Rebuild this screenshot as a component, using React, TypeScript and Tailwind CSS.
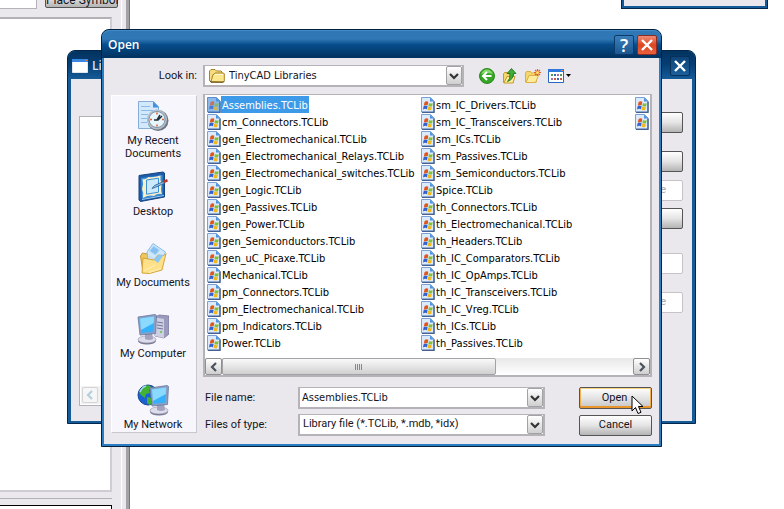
import type { ReactNode } from 'react';

const fileNames = [
  'Assemblies.TCLib',
  'cm_Connectors.TCLib',
  'gen_Electromechanical.TCLib',
  'gen_Electromechanical_Relays.TCLib',
  'gen_Electromechanical_switches.TCLib',
  'gen_Logic.TCLib',
  'gen_Passives.TCLib',
  'gen_Power.TCLib',
  'gen_Semiconductors.TCLib',
  'gen_uC_Picaxe.TCLib',
  'Mechanical.TCLib',
  'pm_Connectors.TCLib',
  'pm_Electromechanical.TCLib',
  'pm_Indicators.TCLib',
  'Power.TCLib',
  'sm_IC_Drivers.TCLib',
  'sm_IC_Transceivers.TCLib',
  'sm_ICs.TCLib',
  'sm_Passives.TCLib',
  'sm_Semiconductors.TCLib',
  'Spice.TCLib',
  'th_Connectors.TCLib',
  'th_Electromechanical.TCLib',
  'th_Headers.TCLib',
  'th_IC_Comparators.TCLib',
  'th_IC_OpAmps.TCLib',
  'th_IC_Transceivers.TCLib',
  'th_IC_Vreg.TCLib',
  'th_ICs.TCLib',
  'th_Passives.TCLib',
  '',
  '',
];

function FileIcon({ selected }: { selected?: boolean }) {
  return (
    <svg width="14" height="16" viewBox="0 0 14 16" className="shrink-0">
      <path d="M0.5 0.5h9l3.500 3.500v11h-12.500z" fill={selected ? '#8ab8ea' : '#dcebfb'} stroke={selected ? '#5a8fcb' : '#7d9fd4'} />
      <path d="M13 4.500v11H1" fill="none" stroke={selected ? '#3f6fae' : '#46608f'} strokeWidth="1.400" />
      <path d="M9 0.500l4 4h-4z" fill="#4d94e0" />
      <g opacity={selected ? 0.7 : 1}>
        <path d="M3.500 5.200q1.700-1.600 3.800-.5l-.6 3.600q-2-.9-3.900.5z" fill="#e0561f" />
        <path d="M7.900 6q2 1 3.800.2l-.6 3q-1.800.8-3.700-.2z" fill="#84bf35" />
        <path d="M2.600 9.200q2-1.200 4-.3l-.6 3.300q-2-.8-4 .3z" fill="#3461cf" />
        <path d="M7.200 9.600q2 1 3.700.2l-.7 3.200q-1.700.8-3.600-.2z" fill="#f0b818" />
      </g>
    </svg>
  );
}

function FolderIcon() {
  return (
    <svg width="16" height="14" viewBox="0 0 16 14" className="shrink-0">
      <path d="M.500 11V2l1.500-1.500h4L7.500 2H12l1 1v2" fill="#f6dc7c" stroke="#a9832a" />
      <path d="M2 12.500L4 5.500h1L6 4h8.500l.8 1v6.500l-1 1.300z" fill="#fbe88e" stroke="#a9832a" />
      <path d="M5.500 5.500h8.500" stroke="#fffbd8" />
      <path d="M.500 11l1.500 2.300h12.300l1.200-1.500" fill="none" stroke="#6b5310" />
    </svg>
  );
}

function Chevron({ direction, color = '#4a525e' }: { direction: 'left' | 'right' | 'down'; color?: string }) {
  const paths = {
    left: 'M7 1L3 5l4 4',
    right: 'M3 1l4 4-4 4',
    down: 'M1 3l4 4 4-4',
  };
  return (
    <svg width="10" height="10" viewBox="0 0 10 10">
      <path d={paths[direction]} fill="none" stroke={color} strokeWidth="2.200" />
    </svg>
  );
}

function RecentIcon() {
  return (
    <svg width="32" height="32" viewBox="0 0 32 32">
      <path d="M1.500 1.500h15l5 5v22h-20z" fill="#d3e8fb" stroke="#86acd8" />
      <path d="M16 1.500l6 6h-6z" fill="#3f92e2" />
      <path d="M4 6.500h9M4 10.500h12M4 14.500h7M4 18.500h6M4 22.500h6" stroke="#8bbce9" />
      <circle cx="21" cy="20.500" r="10.500" fill="#6f7780" />
      <circle cx="20" cy="19.500" r="10" fill="#b4bec8" />
      <circle cx="20" cy="19.500" r="8" fill="#e7f6fd" stroke="#7b93a8" />
      <path d="M20 12.500v2M20 24.500v2M13 19.500h2M25 19.500h2" stroke="#e0602c" strokeWidth="1.500" />
      <path d="M17 20h4l4-4M20 20l3-5" fill="none" stroke="#20303c" strokeWidth="1.500" />
    </svg>
  );
}

function DesktopIcon() {
  return (
    <svg width="32" height="32" viewBox="0 0 32 32">
      <path d="M2 4.500l24-3.500 1.500 1V26L3.500 30.500 2 29z" fill="#1d5cab" stroke="#17437f" />
      <path d="M4 7l21.500-3v20L5 28z" fill="#3b8edc" />
      <path d="M5.500 8q3 1 6-2 5 1 12-1.500-1 4 1.500 8-2 6 0 10.500-5-1-8 2-5-1.500-11 2 1-5-1-9 2-5 .5-10z" fill="#faf0c4" />
      <path d="M9.500 9l12-1.800v14l-12 2z" fill="#cdeafc" stroke="#3b8fd8" />
      <path d="M15 17.500l2.500-3 9-4 1 1.800-9 4z" fill="#8cc4ec" stroke="#24558d" strokeWidth=".8" />
      <path d="M26.500 9.500l3.500-1.500 1 2.500-3.500 1.500z" fill="#c0391f" />
      <path d="M5 28.500L27 24.500" stroke="#9cccf2" />
    </svg>
  );
}

function DocumentsIcon() {
  return (
    <svg width="32" height="32" viewBox="0 0 32 32">
      <path d="M3.500 14l2-3 5 1 1 4 5 9L6 30z" fill="#efc65a" stroke="#c99a32" />
      <path d="M10 10L16 1.500l12.500 8.500L22 24l-11-6z" fill="#cfe8fb" stroke="#8bbce6" />
      <path d="M12.500 9l4-5 6 4-4 5zM12 14l8 5" fill="#84c0f2" stroke="#b6daf6" />
      <path d="M5 31l1-15 11 2 4-5 6 .5 2-2-4 16.500-12.500 3.500z" fill="#fde087" stroke="#d6a43a" />
      <path d="M17 18l4-5 5.500 0-5.500 8z" fill="#8ac8f5" />
      <path d="M7 29l11-6M12 30.500l12-4" stroke="#fff3bd" />
    </svg>
  );
}

function Monitor() {
  return (
    <>
      <ellipse cx="10" cy="28" rx="9" ry="3.500" fill="#74748f" />
      <ellipse cx="10" cy="26.500" rx="9" ry="3.500" fill="#dcdcea" stroke="#9c9cb6" strokeWidth=".7" />
      <path d="M8 19h7l1 7q-4 2-8 0z" fill="#a3a3c0" />
      <path d="M1 4l17-2.500 1.500 1-1 18L3 22z" fill="#8e9fc4" stroke="#6678a0" strokeWidth=".8" />
      <path d="M3 5.500L17 3.500l-.5 15L4.500 20z" fill="#35b0fa" />
      <path d="M3 5.500L17 3.500L16.800 10L4 17z" fill="#8adaff" />
    </>
  );
}

function ComputerIcon() {
  return (
    <svg width="32" height="32" viewBox="0 0 32 32">
      <path d="M18 4.500l4-2.500 10 1v18l-5 4-9-2z" fill="#9b9bbd" stroke="#77779c" strokeWidth=".8" />
      <path d="M18 4.500l9 1.500v19l-9-2z" fill="#cfcfe4" />
      <path d="M20 9l6 1M20 12l6 1M20 15l6 1" stroke="#74749a" />
      <circle cx="24" cy="19" r="1" fill="#54c83a" />
      <Monitor />
    </svg>
  );
}

function NetworkIcon() {
  return (
    <svg width="32" height="32" viewBox="0 0 32 32">
      <circle cx="11" cy="11" r="10" fill="#1a62d2" stroke="#17459b" />
      <path d="M5 4q4-4 8-2l2 2-3 2 1 3-4 1-1 4-4-3-2-3zM10 13l5 1 1 4-3 3-3-2z" fill="#43b233" />
      <path d="M3 8q2-5 6-6" fill="none" stroke="#a3def5" strokeWidth="1.500" />
      <g transform="translate(12 0)">
        <Monitor />
      </g>
    </svg>
  );
}

const places: { label: string; icon: ReactNode }[] = [
  { label: 'My Recent Documents', icon: <RecentIcon /> },
  { label: 'Desktop', icon: <DesktopIcon /> },
  { label: 'My Documents', icon: <DocumentsIcon /> },
  { label: 'My Computer', icon: <ComputerIcon /> },
  { label: 'My Network', icon: <NetworkIcon /> },
];

function Toolbar() {
  return (
    <div className="ml-[15px] flex items-center gap-[7px]">
      <button aria-label="Back">
        <svg width="16" height="16" viewBox="0 0 16 16">
          <circle cx="8" cy="8" r="7.500" fill="#35a526" stroke="#2b8a1e" />
          <path d="M2 6q2-4.500 6-4.500T14 6q-6-2-12 0z" fill="#86d96c" />
          <path d="M12.500 8H4.500M8 4L4 8l4 4" fill="none" stroke="#fff" strokeWidth="2" />
        </svg>
      </button>
      <button aria-label="Up one level">
        <svg width="16" height="16" viewBox="0 0 16 16">
          <path d="M1.500 14.500V6l1-1.500h3l1 1.500h5v8.500z" fill="#f6d76e" stroke="#c69a2e" />
          <path d="M2 15l3-6.500h8L11 15z" fill="#fdec9c" stroke="#c69a2e" />
          <path d="M5.500 13.500q3-2.500 2.500-8H5L9.500.500l4.500 5h-2.500q0 6-6 8z" fill="#3fae35" stroke="#176f17" strokeWidth=".8" />
        </svg>
      </button>
      <button aria-label="Create new folder">
        <svg width="16" height="16" viewBox="0 0 16 16">
          <path d="M.500 14V5l1-1.500h4l1 1.500h5v9z" fill="#f6d76e" stroke="#dcae48" />
          <path d="M1 14.500l3-7h9.500l-3 7z" fill="#fdec9c" stroke="#dcae48" />
          <path d="M12.500 1v7M9 4.500h7M10 2l5 5M15 2l-5 5" stroke="#e4602a" strokeWidth="1.200" />
          <circle cx="12.500" cy="4.500" r="1.500" fill="#ffe26a" />
        </svg>
      </button>
      <button aria-label="View menu" className="flex items-center gap-px">
        <svg width="16" height="16" viewBox="0 0 16 16">
          <path d="M.5 1.500h15v13H.5z" fill="#fff" stroke="#2767c4" />
          <path d="M0 1h16v3H0z" fill="#2f78dc" />
          <path d="M13 2h2v1h-2z" fill="#ee7a44" />
          <path d="M3 6h2v2H3zM12 6h2v2h-2z" fill="#4d9a53" />
          <path d="M6 6h2v2H6zM9 10h2v2H9z" fill="#3a62b8" />
          <path d="M9 6h2v2H9zM3 10h2v2H3z" fill="#a66cae" />
          <path d="M6 10h2v2H6zM12 10h2v2h-2z" fill="#cf5a3c" />
        </svg>
        <svg width="7" height="4" viewBox="0 0 7 4">
          <path d="M1 0h5L3.500 3z" fill="#000" />
        </svg>
      </button>
    </div>
  );
}

function CloseMark() {
  return (
    <svg width="12" height="12" viewBox="0 0 12 12">
      <path d="M1 1l10 10M11 1L1 11" stroke="#fff" strokeWidth="2.400" />
    </svg>
  );
}

function DropArrow() {
  return (
    <span className="pointer-events-none absolute inset-y-0 right-0 flex w-[16px] items-center justify-center rounded-xs border border-[#a2a2a6] bg-linear-to-b from-white to-[#cfcfcf]">
      <Chevron direction="down" color="#333" />
    </span>
  );
}

const pushButton =
  'h-[21px] shrink-0 whitespace-nowrap rounded-xs border border-[#555] bg-linear-to-b from-white via-[#e4e4e4] to-[#b4b4b4] text-center';

function SymbolPanel() {
  return (
    <div className="absolute inset-y-0 left-0 flex w-[130px] border-r border-[#77777a] bg-[#ebe8ed]">
      <div className="flex flex-1 flex-col">
        <div className="flex h-[17px] items-start">
          <div className="h-[9px] w-[37px] border-r border-b border-[#b5b2b8] bg-white" />
          <button className={`${pushButton} -mt-[13px] ml-2 w-[73px] pt-1 text-[12px] leading-[14px]`}>Place Symbol</button>
        </div>
        <div className="mr-[9px] flex-1 border-2 border-l-0 border-[#b3b1b6] border-r-[#cfcdd3] border-b-[#cfcdd3] bg-white" />
        <div className="mr-[9px] h-[7px] border-b border-[#b3b1b6]" />
        <div className="mt-[6px] mr-[9px] h-1 border-t border-r border-black bg-white" />
      </div>
      <div className="w-px bg-white" />
      <div className="w-1" />
      <div className="w-[3px] bg-[#a2a1a5]" />
    </div>
  );
}

function LibrariesWindow() {
  return (
    <section className="absolute top-[50px] right-[88px] left-[67px] rounded-t-lg border border-[#04264c] bg-[#155b98]">
      <header className="flex h-[28px] items-center justify-between rounded-t-lg bg-linear-to-b from-[#03335f] via-[#063f74] to-[#155b98] pt-[2px] pr-[5px] pl-1">
        <h2 className="flex items-center gap-1 font-['Open_Sans'] text-[12px] font-semibold text-[#d8e4f0]">
          <svg width="16" height="14" viewBox="0 0 16 14">
            <path d="M.5 1.500h15v12H.5z" fill="#fff" stroke="#dfe6ee" />
            <path d="M0 0h16v3H0z" fill="#3a86e0" />
            <path d="M13 1h2v1h-2z" fill="#f07838" />
          </svg>
          Libraries
        </h2>
        <button aria-label="Close" className="flex h-5 w-5 items-center justify-center rounded-xs border border-[#062f5a] bg-linear-to-b from-[#0d4479] to-[#1c5f9b]">
          <CloseMark />
        </button>
      </header>
      <div className="mx-[3px] mb-[2px] flex gap-4 bg-[#ebe8ed] pt-[37px] pr-[9px] pb-[15px] pl-2">
        <div className="flex h-[290px] flex-1 flex-col justify-end border border-[#b3b1b6] bg-white p-[1px]">
          <div className="bg-[#f1f1f1] p-px">
            <button aria-label="Scroll left" className="flex h-4 w-4 items-center justify-center rounded-xs border border-[#d5d5d5] bg-[#f6f6f6]">
              <Chevron direction="left" color="#b4cfdc" />
            </button>
          </div>
        </div>
        <div className="-mt-1 flex w-[73px] flex-col text-right text-[#a8a6ac]">
          <button aria-label="Add library" className={pushButton} />
          <button aria-label="New library" className={`${pushButton} mt-[18px]`} />
          <button disabled className="mt-2 h-[21px] rounded-xs border border-[#c6c3c8] bg-white pr-4 text-right">Remove</button>
          <button aria-label="Library details" className={`${pushButton} mt-[7px]`} />
          <button disabled aria-label="Move" className="mt-6 h-[21px] rounded-xs border border-[#c6c3c8] bg-white" />
          <button disabled className="mt-[18px] h-[21px] rounded-xs border border-[#c6c3c8] bg-white pr-4 text-right">Restore</button>
        </div>
      </div>
    </section>
  );
}

function FileList() {
  return (
    <div className="min-w-0 border-2 border-t border-[#b5b2b8] bg-white">
      <ul className="grid h-[263px] grid-flow-col auto-cols-[214px] grid-rows-[repeat(15,17px)] overflow-hidden pt-px pl-[2px] font-['DejaVu_Sans_Condensed'] text-[11px] text-black">
        {fileNames.map((name, i) => (
          <li key={i} className="flex items-center whitespace-nowrap">
            <FileIcon selected={i === 0} />
            <span className={i === 0 ? 'bg-[#3d9ae8] px-px pt-[2px] leading-[15px] text-white' : 'px-px pt-[2px] leading-[15px]'}>{name}</span>
          </li>
        ))}
      </ul>
      <div className="flex h-[17px] bg-linear-to-b from-[#e8e8e8] to-white">
        <button aria-label="Scroll left" className="flex w-[17px] items-center justify-center rounded-xs border border-[#909094] bg-linear-to-b from-white to-[#cfcfcf]">
          <Chevron direction="left" />
        </button>
        <div className="flex flex-1">
          <div className="flex w-2/3 items-center justify-center gap-px rounded-xs border border-[#a3a3a7] bg-linear-to-b from-[#fafafa] to-[#d0d0d0]">
            <i className="h-[6px] w-px bg-[#88888c]" />
            <i className="h-[6px] w-px bg-[#88888c]" />
            <i className="h-[6px] w-px bg-[#88888c]" />
            <i className="h-[6px] w-px bg-[#88888c]" />
          </div>
        </div>
        <button aria-label="Scroll right" className="flex w-[17px] items-center justify-center rounded-xs border border-[#909094] bg-linear-to-b from-white to-[#cfcfcf]">
          <Chevron direction="right" />
        </button>
      </div>
    </div>
  );
}

function OpenDialog() {
  return (
    <section className="absolute top-[29px] right-[122px] left-[101px] rounded-t-lg border border-[#03203f] bg-[#2a7dc0]">
      <header className="flex h-[28px] items-center gap-[3px] rounded-t-lg border-t border-[#3f8ac8] bg-linear-to-b from-[#2f78b5] from-30% via-[#074e8c] via-50% to-[#02315f] pr-1 pl-[6px]">
        <h1 className="flex-1 font-['Open_Sans'] text-[12px] font-semibold text-white">Open</h1>
        <button aria-label="Help" className="flex h-5 w-5 items-center justify-center rounded-xs border border-[#0b3b6b] bg-linear-to-b from-[#3b7fba] to-[#1c5791] font-['Open_Sans'] text-[18px] leading-none font-semibold text-white">
          ?
        </button>
        <button aria-label="Close" className="flex h-5 w-5 items-center justify-center rounded-xs border border-[#8d2d22] bg-linear-to-b from-[#ee8a72] via-[#de4420] to-[#e8603c]">
          <CloseMark />
        </button>
      </header>
      <form className="mx-[2px] mb-[2px] bg-[#ebe8ed] px-[7px] pt-[7px] pb-2" onSubmit={(e) => e.preventDefault()}>
        <div className="flex items-center">
          <label htmlFor="look-in" className="w-[92px] pr-[6px] text-right">Look in:</label>
          <div className="relative h-[22px] w-[261px] border-2 border-t border-[#b5b2b8] bg-white">
            <span className="pointer-events-none absolute inset-y-0 left-1 flex items-center">
              <FolderIcon />
            </span>
            <select id="look-in" className="h-full w-full appearance-none pt-px pl-6 font-['DejaVu_Sans_Condensed'] text-[11px] outline-none">
              <option>TinyCAD Libraries</option>
            </select>
            <DropArrow />
          </div>
          <Toolbar />
        </div>

        <div className="mt-[7px] grid grid-cols-[86px_minmax(0,1fr)] gap-x-[6px]">
          <nav className="row-span-2 mt-px flex h-[338px] flex-col overflow-hidden border border-[#c9c7cd] border-t-white border-l-white bg-[#f7f6fc] pt-1 pr-[2px]">
            {places.map((place) => (
              <button key={place.label} className="flex h-[71px] shrink-0 flex-col items-center leading-[13px]">
                <span className="h-[34px]">{place.icon}</span>
                <span className="w-20">{place.label}</span>
              </button>
            ))}
          </nav>
          <FileList />

          <div className="mt-[10px] flex flex-col gap-[5px]">
            <div className="flex items-center">
              <label htmlFor="file-name" className="w-[95px] pl-[2px]">File name:</label>
              <div className="relative mr-[34px] h-[22px] flex-1 border-2 border-t border-[#b5b2b8] bg-white">
                <input id="file-name" defaultValue="Assemblies.TCLib" className="h-full w-full pl-[2px] font-['DejaVu_Sans_Condensed'] text-[11px] outline-none" />
                <DropArrow />
              </div>
              <button className="h-[22px] w-[73px] rounded-xs border border-[#555] bg-linear-to-b from-white via-[#e4e4e4] to-[#c4c4c4] pr-[2px] shadow-[inset_0_1px_#f8d27c,inset_0_-2px_#e8952c,inset_1px_0_#f0b050,inset_-1px_0_#f0b050]">
                Open
              </button>
            </div>
            <div className="flex items-center">
              <label htmlFor="file-type" className="w-[95px] pl-[2px]">Files of type:</label>
              <div className="relative mr-[34px] h-[22px] flex-1 border-2 border-t border-[#b5b2b8] bg-white">
                <select id="file-type" className="h-full w-full appearance-none pl-[3px] outline-none">
                  <option>Library file (*.TCLib, *.mdb, *idx)</option>
                </select>
                <DropArrow />
              </div>
              <button className={`${pushButton} w-[73px]`}>Cancel</button>
            </div>
          </div>
        </div>
      </form>
      <svg width="13" height="21" viewBox="0 0 13 21" className="absolute right-[17px] bottom-[30px]">
        <path d="M1 1v15l3.500-3.500L7 18.500l3-1.200-2.500-5.800H12z" fill="#fff" stroke="#000" />
      </svg>
    </section>
  );
}

export default function App() {
  return (
    <main className="relative min-h-screen overflow-hidden bg-white font-['Roboto','Liberation_Sans',sans-serif] text-[11px] text-[#14141c]">
      <SymbolPanel />
      <section className="absolute top-0 right-4 h-[9px] w-[147px] border border-t-0 border-[#04264c] bg-[#155b98] px-[2px] pb-[2px]">
        <div className="h-[6px] bg-[#ebe8ed]" />
      </section>
      <LibrariesWindow />
      <OpenDialog />
    </main>
  );
}
